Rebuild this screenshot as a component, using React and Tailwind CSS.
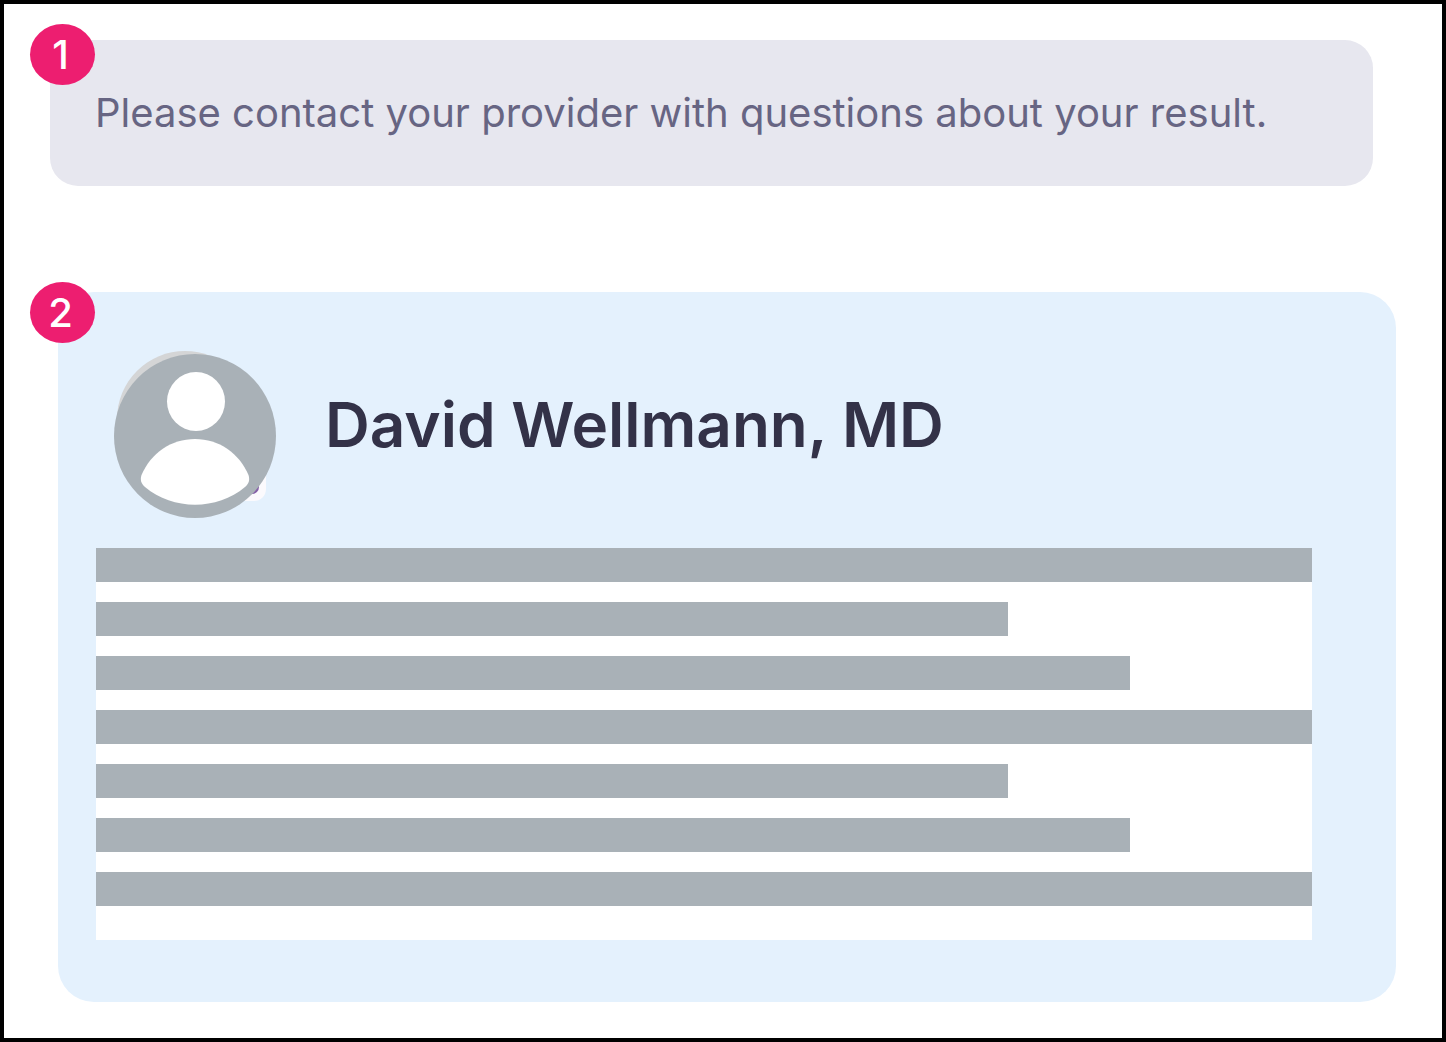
import React from 'react';

function Badge({ place, children }) {
  return (
    <span
      className={`absolute flex h-[61px] w-[65px] items-center justify-center rounded-[50%] bg-[#ed1e70] pr-1 text-[40px] leading-none font-medium text-white ${place}`}
    >
      {children}
    </span>
  );
}

function Avatar() {
  return (
    <svg viewBox="0 0 164 168" className="h-[168px] w-[164px] shrink-0" role="img" aria-label="Provider photo">
      <ellipse cx="72" cy="69" rx="68" ry="68" fill="#d4d5d6" />
      <rect x="112" y="110" width="41" height="41" rx="12" fill="#fbfafd" />
      <circle cx="139" cy="137" r="7" fill="#8560a8" />
      <ellipse cx="82" cy="86" rx="81" ry="82" fill="#a9b1b7" />
      <ellipse cx="83" cy="51.5" rx="29" ry="29.5" fill="#fff" />
      <path
        d="M82 89C106 89 126 103 135.500 125C137 130 136 133.500 132 137C118 149 100 154.700 82 154.700C64 154.700 46 149 32 137C28 133.500 27 130 28.500 125C38 103 58 89 82 89Z"
        fill="#fff"
      />
    </svg>
  );
}

const lines = ['w-full', 'w-3/4', 'w-[85%]', 'w-full', 'w-3/4', 'w-[85%]', 'w-full'];

export default function App() {
  return (
    <main className="min-h-screen border-4 border-black bg-white px-[46px] py-9 font-['Inter',sans-serif]">
      <section className="relative mr-[23px] rounded-[28px] bg-[#e7e7ef] py-[49px] pr-12 pl-[45px]">
        <Badge place="-left-5 -top-4">1</Badge>
        <p className="text-[40px] leading-[48px] text-[#676583]">
          Please contact your provider with questions about your result.
        </p>
      </section>

      <section className="relative mt-[106px] ml-2 rounded-[36px] bg-[#e4f1fd] pt-[58px] pr-[84px] pb-[62px] pl-[38px]">
        <Badge place="-left-7 -top-2.5">2</Badge>
        <header className="flex items-center pl-[17px]">
          <Avatar />
          <h1 className="ml-12 pb-[18px] text-[62px] leading-[76px] font-semibold text-[#333248]">
            David Wellmann, MD
          </h1>
        </header>
        <div className="mt-[30px] flex flex-col gap-5 bg-white pb-[34px]">
          {lines.map((width, i) => (
            <div key={i} className={`h-[34px] bg-[#a9b1b7] ${width}`} />
          ))}
        </div>
      </section>
    </main>
  );
}
